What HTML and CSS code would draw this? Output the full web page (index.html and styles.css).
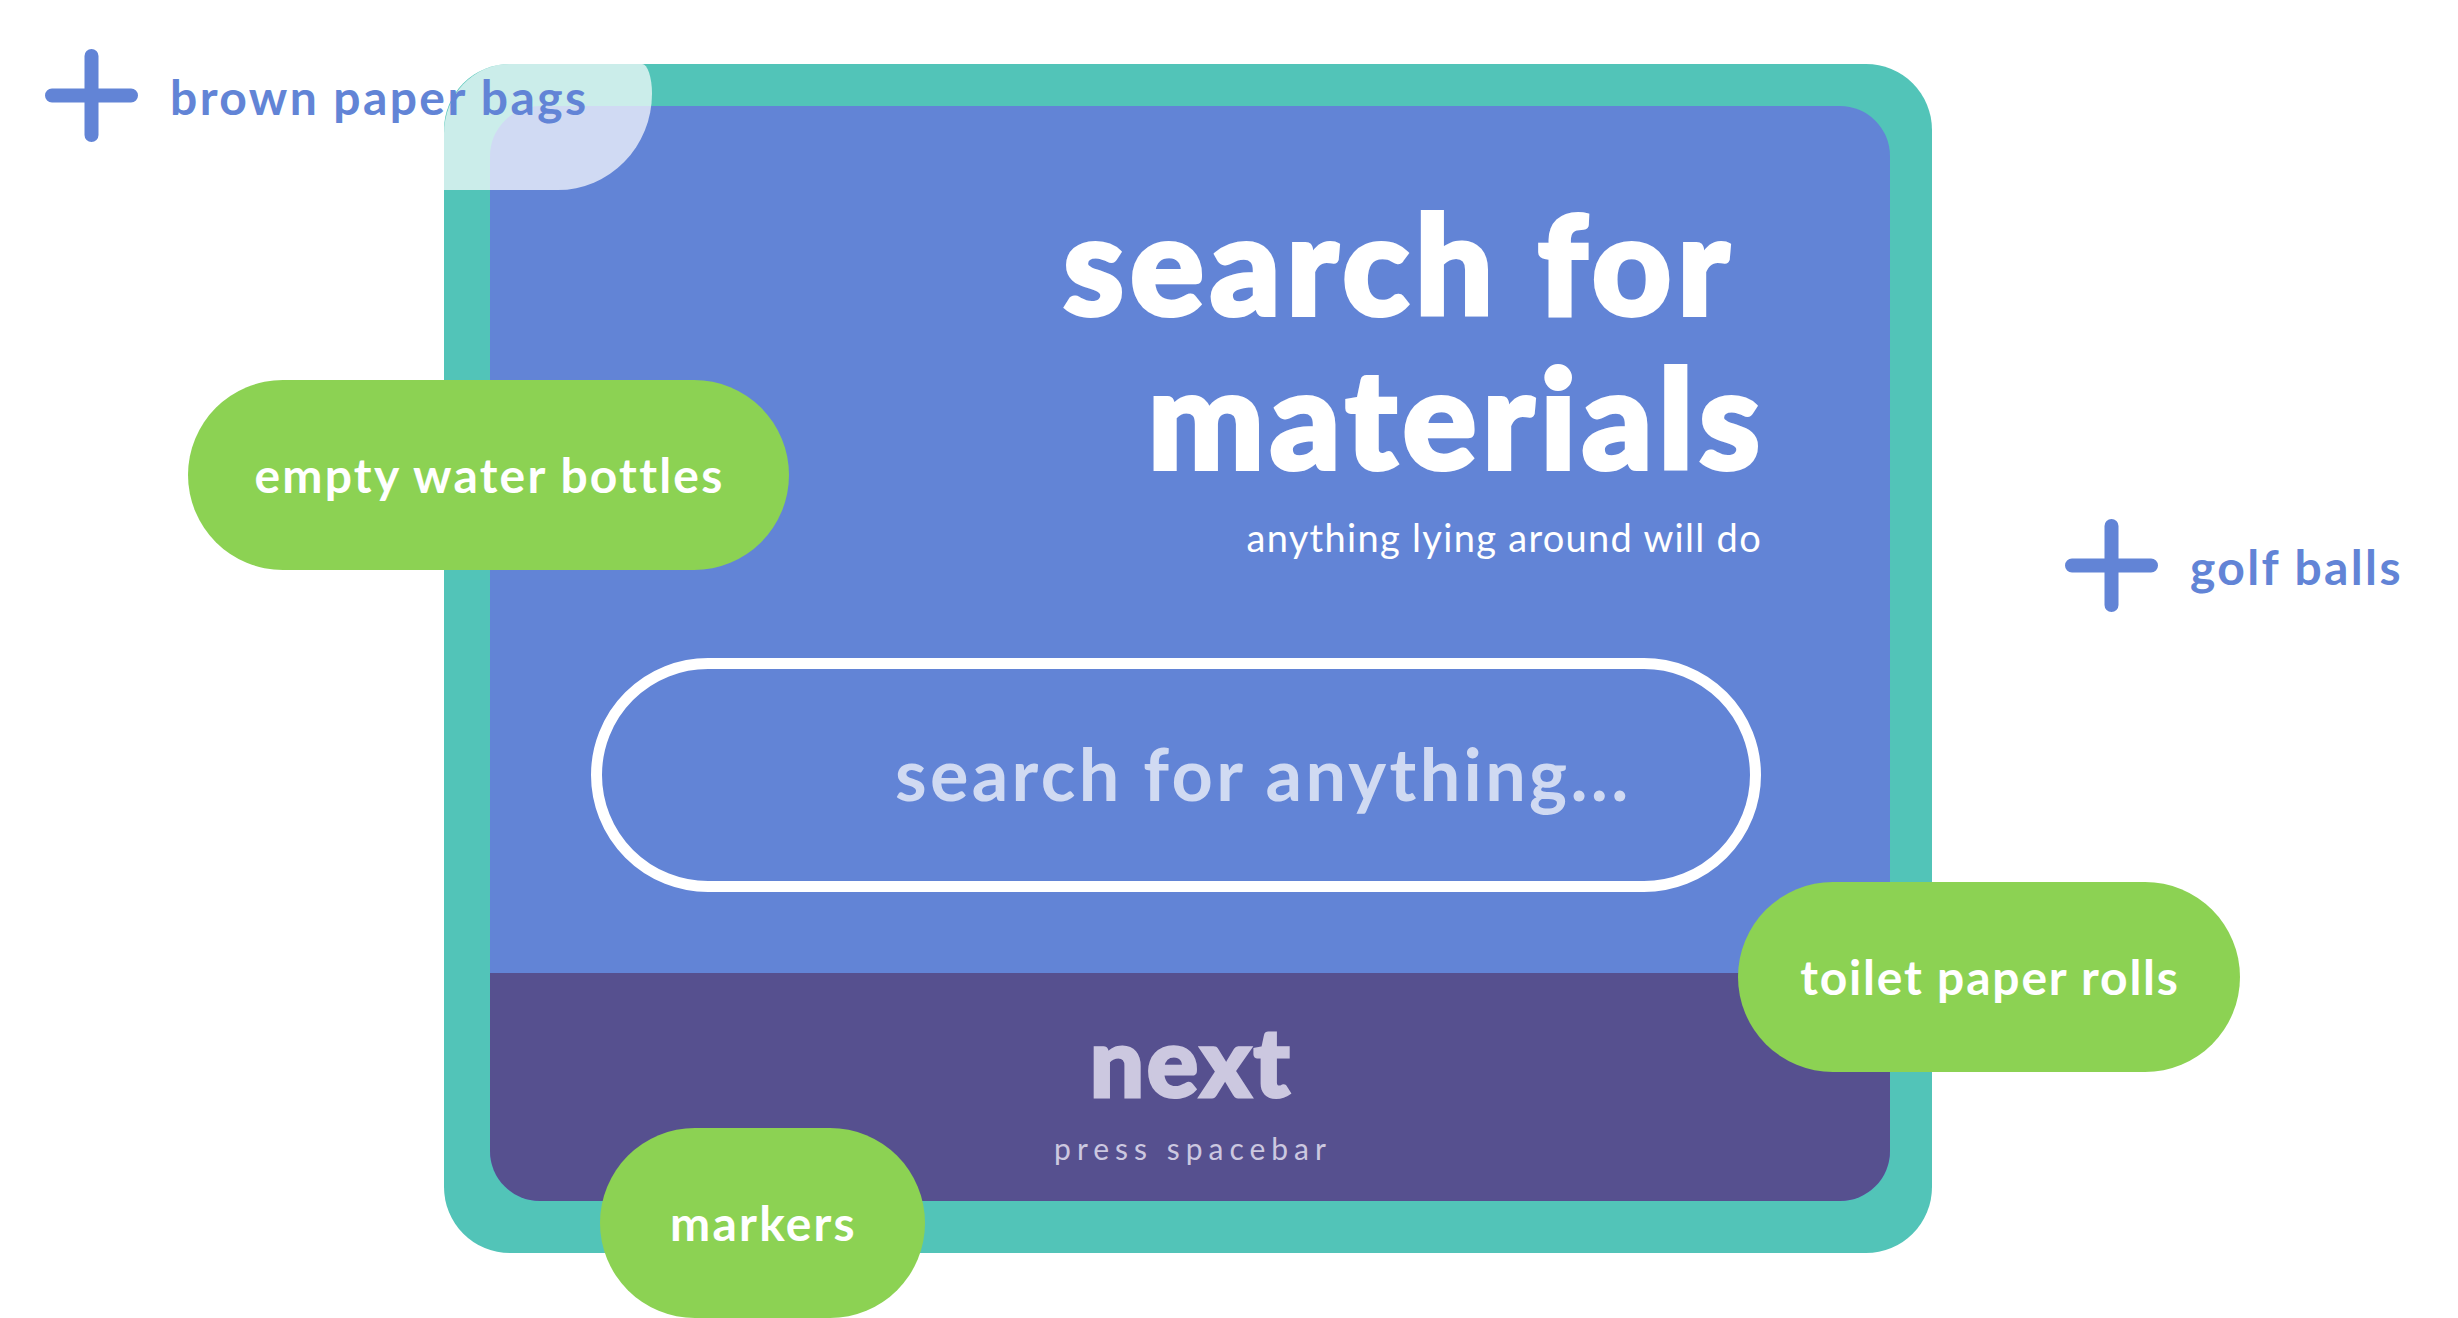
FILE: index.html
```html
<!DOCTYPE html>
<html lang="en">
<head>
<meta charset="utf-8">
<title>search for materials</title>
<link rel="stylesheet" href="styles.css">
</head>
<body>
<div class="stage">
  <div class="frame">
    <div class="card">
      <section class="hero">
        <h1 class="title"><span class="title-line title-line-first">search for</span><span class="title-line">materials</span></h1>
        <p class="subtitle">anything lying around will do</p>
        <div class="search"><span class="placeholder">search for anything...</span></div>
      </section>
      <section class="next">
        <div class="next-label">next</div>
        <div class="next-hint">press spacebar</div>
      </section>
    </div>
    <div class="corner-glow"></div>
  </div>

  <div class="tag tag-bags">
    <svg class="plus" viewBox="0 0 93 93" width="93" height="93"><path d="M46.5 7V86M7 46.5H86" stroke="currentColor" stroke-width="14" stroke-linecap="round" fill="none"/></svg>
    <span class="tag-text">brown paper bags</span>
  </div>
  <div class="tag tag-golf">
    <svg class="plus" viewBox="0 0 93 93" width="93" height="93"><path d="M46.5 7V86M7 46.5H86" stroke="currentColor" stroke-width="14" stroke-linecap="round" fill="none"/></svg>
    <span class="tag-text">golf balls</span>
  </div>

  <div class="pill pill-bottles">empty water bottles</div>
  <div class="pill pill-toilet">toilet paper rolls</div>
  <div class="pill pill-markers">markers</div>
</div>
</body>
</html>
```

FILE: styles.css
```css
html, body {
  margin: 0;
  padding: 0;
  background: #ffffff;
}

body {
  font-family: "Lato", "Noto Sans", sans-serif;
}

.stage {
  position: relative;
  width: 2458px;
  height: 1318px;
  overflow: hidden;
  box-sizing: border-box;
  padding: 64px 0 0 444px;
}

.frame {
  position: relative;
  width: 1488px;
  height: 1189px;
  box-sizing: border-box;
  padding: 42px 42px 52px 46px;
  background: #52c4b8;
  border-radius: 66px;
}

.card {
  height: 100%;
  display: flex;
  flex-direction: column;
  border-radius: 50px;
  overflow: hidden;
  background: #6284d6;
}

.hero {
  height: 867px;
  box-sizing: border-box;
  padding: 79px 124px 0 101px;
  display: flex;
  flex-direction: column;
}

.title {
  margin: 0;
  font-size: 138px;
  line-height: 154px;
  font-weight: 900;
  color: #ffffff;
  text-align: right;
  letter-spacing: 5.8px;
  -webkit-text-stroke: 4px #ffffff;
}

.title-line {
  display: block;
}

.title-line-first {
  padding-right: 31px;
}

.subtitle {
  margin: 21px 4px 0 0;
  font-size: 38px;
  line-height: 46px;
  font-weight: 400;
  color: #ffffff;
  text-align: right;
  letter-spacing: 1.3px;
}

.search {
  margin-top: 98px;
  margin-right: 5px;
  height: 234px;
  box-sizing: border-box;
  border: 11px solid #ffffff;
  border-radius: 117px;
  display: flex;
  align-items: center;
  padding-left: 293px;
  padding-bottom: 5px;
}

.placeholder {
  font-size: 72px;
  font-weight: 700;
  color: #d0daf2;
  line-height: 80px;
  letter-spacing: 3.3px;
}

.next {
  flex: 1;
  background: #56508f;
  display: flex;
  flex-direction: column;
  align-items: center;
  padding-top: 39px;
  box-sizing: border-box;
}

.next-label {
  font-size: 96px;
  line-height: 96px;
  font-weight: 900;
  color: #ccc8e0;
  letter-spacing: 2.5px;
  padding-left: 2px;
  -webkit-text-stroke: 3px #ccc8e0;
}

.next-hint {
  margin-top: 22px;
  font-size: 30px;
  line-height: 36px;
  font-weight: 400;
  color: #ccc8e0;
  letter-spacing: 6px;
  padding-left: 6px;
}

.corner-glow {
  position: absolute;
  left: 0;
  top: 0;
  width: 208px;
  height: 126px;
  background: rgba(255, 255, 255, 0.7);
  border-radius: 66px 10px 95px 0 / 70px 30px 97px 0;
}

.tag {
  position: absolute;
  display: flex;
  align-items: center;
  gap: 32px;
  color: #6284d6;
}

.tag-bags {
  left: 45px;
  top: 49px;
}

.tag-golf {
  left: 2065px;
  top: 519px;
}

.plus {
  display: block;
  flex: none;
}

.tag-text {
  font-size: 48px;
  line-height: 48px;
  font-weight: 700;
  margin-top: 3px;
  letter-spacing: 2.4px;
}

.pill {
  position: absolute;
  height: 190px;
  box-sizing: border-box;
  border-radius: 95px;
  background: #8cd253;
  color: #ffffff;
  display: flex;
  align-items: center;
  justify-content: center;
  font-size: 48px;
  font-weight: 700;
  line-height: 48px;
  letter-spacing: 2.2px;
  padding-left: 2px;
}

.pill-bottles {
  left: 188px;
  top: 380px;
  width: 601px;
}

.pill-toilet {
  left: 1738px;
  top: 882px;
  width: 502px;
  letter-spacing: 1.8px;
}

.pill-markers {
  left: 600px;
  top: 1128px;
  width: 325px;
}
```
